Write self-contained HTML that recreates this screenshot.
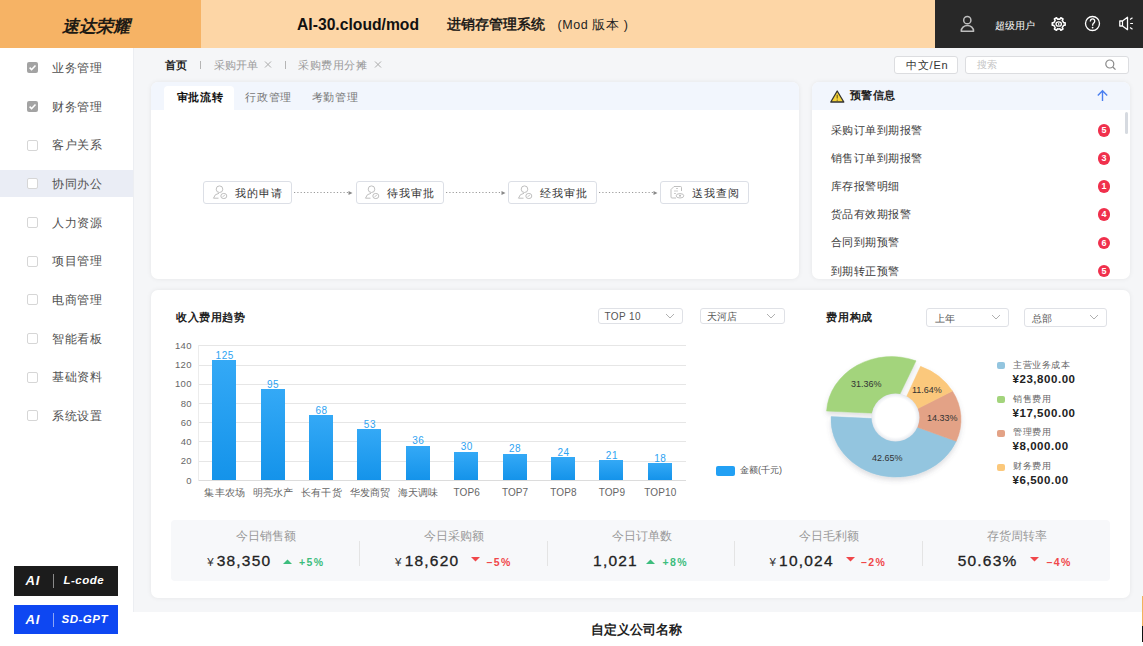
<!DOCTYPE html><html><head><meta charset="utf-8"><style>
*{box-sizing:border-box;margin:0;padding:0}
html,body{width:1143px;height:646px;overflow:hidden;background:#f5f6f8;font-family:"Liberation Sans",sans-serif;color:#333}
.a{position:absolute;white-space:nowrap;line-height:1;-webkit-text-stroke-width:0px}
.card{position:absolute;background:#fff;border-radius:7px;box-shadow:0 0 5px rgba(0,0,0,0.07)}
</style></head><body>
<div class="a" style="left:0;top:0;width:1143px;height:48px;background:#fdd6a6"></div>
<div class="a" style="left:0;top:0;width:201px;height:48px;background:#f6b365"></div>
<div class="a" style="left:935px;top:0;width:208px;height:48px;background:#282828"></div>
<div class="a" style="left:62px;top:17.5px;font-size:17px;font-weight:bold;font-style:italic;color:#1e1a14">速达荣耀</div>
<div class="a" style="left:297px;top:16.5px;font-size:15.7px;font-weight:bold;color:#111">AI-30.cloud/mod</div>
<div class="a" style="left:447px;top:17px;font-size:14px;color:#111;-webkit-text-stroke-width:0.45px">进销存管理系统</div>
<div class="a" style="left:557.5px;top:18.5px;font-size:12.5px;letter-spacing:0.6px;color:#222">(Mod 版本 )</div>
<div class="a" style="left:995px;top:20.5px;font-size:10px;color:#fff">超级用户</div>
<svg class="a" style="left:958px;top:14px" width="20" height="20" viewBox="0 0 20 20">
<circle cx="9.3" cy="6.2" r="3.6" fill="none" stroke="#bdbdbd" stroke-width="1.5"/>
<path d="M3.2 17.2 A6.2 5.8 0 0 1 15.6 17.2 Z" fill="none" stroke="#bdbdbd" stroke-width="1.5" stroke-linejoin="round"/>
</svg>
<svg class="a" style="left:1050px;top:15px" width="18" height="18" viewBox="0 0 18 18">
<path d="M13.03 6.50 L13.53 7.71 L15.18 7.74 L15.18 10.26 L13.53 10.29 L13.03 11.50 L12.24 12.54 L13.03 13.98 L10.85 15.24 L9.99 13.83 L8.70 14.00 L7.41 13.83 L6.55 15.24 L4.37 13.98 L5.16 12.54 L4.37 11.50 L3.87 10.29 L2.22 10.26 L2.22 7.74 L3.87 7.71 L4.37 6.50 L5.16 5.46 L4.37 4.02 L6.55 2.76 L7.41 4.17 L8.70 4.00 L9.99 4.17 L10.85 2.76 L13.03 4.02 L12.24 5.46 Z" fill="none" stroke="#fff" stroke-width="1.5" stroke-linejoin="round"/>
<ellipse cx="8.7" cy="9" rx="2.7" ry="2.2" fill="none" stroke="#fff" stroke-width="1.3"/>
<path d="M8.7 8 L8.7 10.2" stroke="#fff" stroke-width="1.1"/>
</svg>
<svg class="a" style="left:1084px;top:15px" width="18" height="18" viewBox="0 0 18 18">
<circle cx="8.5" cy="8.5" r="7" fill="none" stroke="#fff" stroke-width="1.3"/>
<path d="M6.3 6.5 Q6.5 3.8 8.7 3.9 Q10.9 4.1 10.7 6.3 Q10.5 7.6 9.3 8.4 Q8.6 9 8.6 10.8" fill="none" stroke="#fff" stroke-width="1.3"/>
<circle cx="8.6" cy="12.6" r="0.9" fill="#fff"/>
</svg>
<svg class="a" style="left:1118px;top:15px" width="18" height="18" viewBox="0 0 18 18">
<path d="M1.8 6 L4.5 6 L9.5 2.3 L9.5 14.7 L4.5 11 L1.8 11 Z" fill="none" stroke="#fff" stroke-width="1.3" stroke-linejoin="round"/>
<path d="M4.5 6 L4.5 11" stroke="#fff" stroke-width="1.2"/>
<path d="M12 4.5 L14.5 2.8 M12.2 8.5 L15 8.5 M12 12.5 L14.5 14.2" stroke="#fff" stroke-width="1.2"/>
</svg>
<div class="a" style="left:0;top:48px;width:134px;height:598px;background:#fff;border-right:1px solid #eceef2"></div>
<div class="a" style="left:27px;top:62.3px;width:11px;height:11px;border-radius:2px;background:#a3a3a3"></div>
<svg class="a" style="left:27px;top:62.3px" width="11" height="11" viewBox="0 0 11 11"><path d="M2.6 5.6 L4.6 7.6 L8.5 3.6" fill="none" stroke="#fff" stroke-width="1.5"/></svg>
<div class="a" style="left:52.3px;top:62.0px;font-size:12px;letter-spacing:0.6px;color:#505050">业务管理</div>
<div class="a" style="left:27px;top:100.9px;width:11px;height:11px;border-radius:2px;background:#a3a3a3"></div>
<svg class="a" style="left:27px;top:100.9px" width="11" height="11" viewBox="0 0 11 11"><path d="M2.6 5.6 L4.6 7.6 L8.5 3.6" fill="none" stroke="#fff" stroke-width="1.5"/></svg>
<div class="a" style="left:52.3px;top:100.6px;font-size:12px;letter-spacing:0.6px;color:#505050">财务管理</div>
<div class="a" style="left:27px;top:139.6px;width:11px;height:11px;border-radius:2px;border:1px solid #d6d6d6;background:#fff"></div>
<div class="a" style="left:52.3px;top:139.3px;font-size:12px;letter-spacing:0.6px;color:#505050">客户关系</div>
<div class="a" style="left:0;top:170.2px;width:133px;height:27px;background:#eaedf5"></div>
<div class="a" style="left:27px;top:178.2px;width:11px;height:11px;border-radius:2px;border:1px solid #d6d6d6;background:#fff"></div>
<div class="a" style="left:52.3px;top:177.9px;font-size:12px;letter-spacing:0.6px;color:#505050">协同办公</div>
<div class="a" style="left:27px;top:216.9px;width:11px;height:11px;border-radius:2px;border:1px solid #d6d6d6;background:#fff"></div>
<div class="a" style="left:52.3px;top:216.6px;font-size:12px;letter-spacing:0.6px;color:#505050">人力资源</div>
<div class="a" style="left:27px;top:255.6px;width:11px;height:11px;border-radius:2px;border:1px solid #d6d6d6;background:#fff"></div>
<div class="a" style="left:52.3px;top:255.2px;font-size:12px;letter-spacing:0.6px;color:#505050">项目管理</div>
<div class="a" style="left:27px;top:294.2px;width:11px;height:11px;border-radius:2px;border:1px solid #d6d6d6;background:#fff"></div>
<div class="a" style="left:52.3px;top:293.9px;font-size:12px;letter-spacing:0.6px;color:#505050">电商管理</div>
<div class="a" style="left:27px;top:332.9px;width:11px;height:11px;border-radius:2px;border:1px solid #d6d6d6;background:#fff"></div>
<div class="a" style="left:52.3px;top:332.6px;font-size:12px;letter-spacing:0.6px;color:#505050">智能看板</div>
<div class="a" style="left:27px;top:371.5px;width:11px;height:11px;border-radius:2px;border:1px solid #d6d6d6;background:#fff"></div>
<div class="a" style="left:52.3px;top:371.2px;font-size:12px;letter-spacing:0.6px;color:#505050">基础资料</div>
<div class="a" style="left:27px;top:410.1px;width:11px;height:11px;border-radius:2px;border:1px solid #d6d6d6;background:#fff"></div>
<div class="a" style="left:52.3px;top:409.8px;font-size:12px;letter-spacing:0.6px;color:#505050">系统设置</div>
<div class="a" style="left:13.5px;top:566px;width:104px;height:29.5px;background:#1c1c1c"></div>
<div class="a" style="left:13.5px;top:605px;width:104px;height:29px;background:#0e47f2"></div>
<div class="a" style="left:25.5px;top:574.0px;font-size:13px;font-weight:bold;font-style:italic;letter-spacing:0.8px;color:#fff">AI</div>
<div class="a" style="left:52.5px;top:574px;width:1px;height:14px;background:#8a8a8a"></div>
<div class="a" style="left:63.5px;top:575.0px;font-size:11.5px;font-weight:bold;font-style:italic;letter-spacing:0.5px;color:#fff">L-code</div>
<div class="a" style="left:25.5px;top:613.0px;font-size:13px;font-weight:bold;font-style:italic;letter-spacing:0.8px;color:#fff">AI</div>
<div class="a" style="left:52.5px;top:613px;width:1px;height:14px;background:#8da6f5"></div>
<div class="a" style="left:61.5px;top:614.0px;font-size:11.5px;font-weight:bold;font-style:italic;letter-spacing:0.5px;color:#fff">SD-GPT</div>
<div class="a" style="left:165px;top:59.5px;font-size:11px;font-weight:bold;color:#222">首页</div>
<div class="a" style="left:199.5px;top:61px;width:1px;height:8px;background:#b5b5b5"></div>
<div class="a" style="left:213.5px;top:59.5px;font-size:11px;color:#9a9a9a">采购开单</div>
<svg class="a" style="left:264px;top:60px" width="8" height="9" viewBox="0 0 8 9"><path d="M1 1.5 L7 7.5 M7 1.5 L1 7.5" stroke="#aaa" stroke-width="1"/></svg>
<div class="a" style="left:284.5px;top:61px;width:1px;height:8px;background:#b5b5b5"></div>
<div class="a" style="left:298px;top:59.5px;font-size:11px;letter-spacing:0.6px;color:#9a9a9a">采购费用分摊</div>
<svg class="a" style="left:373.5px;top:60px" width="8" height="9" viewBox="0 0 8 9"><path d="M1 1.5 L7 7.5 M7 1.5 L1 7.5" stroke="#aaa" stroke-width="1"/></svg>
<div class="a" style="left:894px;top:55.5px;width:64px;height:18.5px;border:1px solid #dcdde0;border-radius:3px;background:#fff"></div>
<div class="a" style="left:906px;top:59.5px;font-size:11px;letter-spacing:0.8px;color:#333">中文/En</div>
<div class="a" style="left:964.5px;top:55.5px;width:164.5px;height:18.5px;border:1px solid #dcdde0;border-radius:3px;background:#fff"></div>
<div class="a" style="left:976.5px;top:60px;font-size:10px;color:#c4c4c4">搜索</div>
<svg class="a" style="left:1104px;top:59px" width="14" height="12" viewBox="0 0 14 12"><circle cx="5.8" cy="5" r="4" fill="none" stroke="#8a8a8a" stroke-width="1.2"/><path d="M8.8 8 L11.5 10.6" stroke="#8a8a8a" stroke-width="1.3"/></svg>
<div class="card" style="left:151px;top:82px;width:648px;height:197px"></div>
<div class="a" style="left:151px;top:82px;width:648px;height:28px;background:#f2f6fd;border-radius:7px 7px 0 0"></div>
<div class="a" style="left:164px;top:85.5px;width:70px;height:24.5px;background:#fff;border-radius:4px 4px 0 0"></div>
<div class="a" style="left:176.5px;top:92px;font-size:11px;letter-spacing:0.8px;font-weight:bold;color:#111">审批流转</div>
<div class="a" style="left:245px;top:92px;font-size:11px;letter-spacing:0.75px;color:#777">行政管理</div>
<div class="a" style="left:311.5px;top:92px;font-size:11px;letter-spacing:0.75px;color:#777">考勤管理</div>
<div class="a" style="left:203.0px;top:181px;width:88.5px;height:23px;border:1px solid #dcdfe6;border-radius:3px;background:#fff"></div>
<svg class="a" style="left:211.5px;top:185px" width="18" height="16" viewBox="0 0 18 16"><circle cx="7.5" cy="4.2" r="3.3" fill="none" stroke="#b8b8b8" stroke-width="0.9"/><path d="M1.5 13.2 Q2.5 8.8 7 8.3 M1.5 13.2 L6.5 13.2" fill="none" stroke="#b8b8b8" stroke-width="0.9"/><ellipse cx="11.8" cy="11" rx="3" ry="2.6" fill="none" stroke="#b8b8b8" stroke-width="0.9"/><path d="M10.5 11.8 L12.8 10.2" stroke="#b8b8b8" stroke-width="0.8"/></svg>
<div class="a" style="left:234.5px;top:187.5px;font-size:11px;letter-spacing:1px;color:#333">我的申请</div>
<svg class="a" style="left:292.5px;top:191px" width="60.0" height="3"><line x1="1" y1="1.5" x2="56.0" y2="1.5" stroke="#9a9a9a" stroke-width="1.1" stroke-dasharray="1.2 2.1"/></svg>
<svg class="a" style="left:348.0px;top:189.5px" width="5" height="6" viewBox="0 0 5 6"><path d="M0.5 1 L4.5 3 L0.5 5 Z" fill="#888"/></svg>
<div class="a" style="left:355.5px;top:181px;width:88.5px;height:23px;border:1px solid #dcdfe6;border-radius:3px;background:#fff"></div>
<svg class="a" style="left:364.0px;top:185px" width="18" height="16" viewBox="0 0 18 16"><circle cx="7.5" cy="4.2" r="3.3" fill="none" stroke="#b8b8b8" stroke-width="0.9"/><path d="M1.5 13.2 Q2.5 8.8 7 8.3 M1.5 13.2 L6.5 13.2" fill="none" stroke="#b8b8b8" stroke-width="0.9"/><ellipse cx="11.8" cy="11" rx="3" ry="2.6" fill="none" stroke="#b8b8b8" stroke-width="0.9"/><path d="M10.5 11.8 L12.8 10.2" stroke="#b8b8b8" stroke-width="0.8"/></svg>
<div class="a" style="left:387.0px;top:187.5px;font-size:11px;letter-spacing:1px;color:#333">待我审批</div>
<svg class="a" style="left:445.0px;top:191px" width="60.0" height="3"><line x1="1" y1="1.5" x2="56.0" y2="1.5" stroke="#9a9a9a" stroke-width="1.1" stroke-dasharray="1.2 2.1"/></svg>
<svg class="a" style="left:500.5px;top:189.5px" width="5" height="6" viewBox="0 0 5 6"><path d="M0.5 1 L4.5 3 L0.5 5 Z" fill="#888"/></svg>
<div class="a" style="left:508.0px;top:181px;width:88.5px;height:23px;border:1px solid #dcdfe6;border-radius:3px;background:#fff"></div>
<svg class="a" style="left:516.5px;top:185px" width="18" height="16" viewBox="0 0 18 16"><circle cx="7.5" cy="4.2" r="3.3" fill="none" stroke="#b8b8b8" stroke-width="0.9"/><path d="M1.5 13.2 Q2.5 8.8 7 8.3 M1.5 13.2 L6.5 13.2" fill="none" stroke="#b8b8b8" stroke-width="0.9"/><ellipse cx="11.8" cy="11" rx="3" ry="2.6" fill="none" stroke="#b8b8b8" stroke-width="0.9"/><path d="M10.5 11.8 L12.8 10.2" stroke="#b8b8b8" stroke-width="0.8"/></svg>
<div class="a" style="left:539.5px;top:187.5px;font-size:11px;letter-spacing:1px;color:#333">经我审批</div>
<svg class="a" style="left:597.5px;top:191px" width="59.5" height="3"><line x1="1" y1="1.5" x2="55.5" y2="1.5" stroke="#9a9a9a" stroke-width="1.1" stroke-dasharray="1.2 2.1"/></svg>
<svg class="a" style="left:652.5px;top:189.5px" width="5" height="6" viewBox="0 0 5 6"><path d="M0.5 1 L4.5 3 L0.5 5 Z" fill="#888"/></svg>
<div class="a" style="left:660.0px;top:181px;width:88.5px;height:23px;border:1px solid #dcdfe6;border-radius:3px;background:#fff"></div>
<svg class="a" style="left:668.5px;top:185px" width="18" height="16" viewBox="0 0 18 16"><path d="M5 1.5 L11.5 1.5 Q12.5 1.5 12.5 2.5 L12.5 6 M7 13 L3 13 Q2 13 2 12 L2 4.5 L5 1.5" fill="none" stroke="#b8b8b8" stroke-width="0.9"/><path d="M5 6 L9 6 M5 8.5 L7 8.5 M7 3.5 L9 3.5" stroke="#c0c0c0" stroke-width="0.8"/><ellipse cx="11" cy="10.8" rx="3.8" ry="2.2" fill="none" stroke="#b8b8b8" stroke-width="0.9"/><circle cx="11" cy="10.8" r="1" fill="#b8b8b8"/></svg>
<div class="a" style="left:691.5px;top:187.5px;font-size:11px;letter-spacing:1px;color:#333">送我查阅</div>
<div class="card" style="left:811.5px;top:82px;width:318px;height:197px;overflow:hidden"></div>
<div class="a" style="left:811.5px;top:82px;width:318px;height:27.5px;background:#f2f6fd;border-radius:7px 7px 0 0"></div>
<svg class="a" style="left:830px;top:89.5px" width="15" height="13" viewBox="0 0 15 13"><path d="M7.2 1 L13.8 12 L0.8 12 Z" fill="#f5d33a" stroke="#333" stroke-width="1.3" stroke-linejoin="round"/><path d="M7.2 4.8 L7.2 8.6" stroke="#6b5a10" stroke-width="1.1"/><circle cx="7.2" cy="10.2" r="0.6" fill="#6b5a10"/></svg>
<div class="a" style="left:849.5px;top:90px;font-size:11px;letter-spacing:0.6px;font-weight:bold;color:#222">预警信息</div>
<svg class="a" style="left:1096px;top:89px" width="13" height="13" viewBox="0 0 13 13"><path d="M6.5 12 L6.5 2 M1.8 6.6 L6.5 1.8 L11.2 6.6" fill="none" stroke="#4a7ff0" stroke-width="1.4"/></svg>
<div class="a" style="left:830.5px;top:125.0px;font-size:11px;letter-spacing:0.5px;color:#3a3a3a">采购订单到期报警</div>
<div class="a" style="left:1097.8px;top:124.1px;width:12.5px;height:12.5px;border-radius:50%;background:#f0304c;color:#fff;font-size:9px;font-weight:bold;text-align:center;line-height:12.5px">5</div>
<div class="a" style="left:830.5px;top:153.1px;font-size:11px;letter-spacing:0.5px;color:#3a3a3a">销售订单到期报警</div>
<div class="a" style="left:1097.8px;top:152.2px;width:12.5px;height:12.5px;border-radius:50%;background:#f0304c;color:#fff;font-size:9px;font-weight:bold;text-align:center;line-height:12.5px">3</div>
<div class="a" style="left:830.5px;top:181.2px;font-size:11px;letter-spacing:0.5px;color:#3a3a3a">库存报警明细</div>
<div class="a" style="left:1097.8px;top:180.3px;width:12.5px;height:12.5px;border-radius:50%;background:#f0304c;color:#fff;font-size:9px;font-weight:bold;text-align:center;line-height:12.5px">1</div>
<div class="a" style="left:830.5px;top:209.3px;font-size:11px;letter-spacing:0.5px;color:#3a3a3a">货品有效期报警</div>
<div class="a" style="left:1097.8px;top:208.4px;width:12.5px;height:12.5px;border-radius:50%;background:#f0304c;color:#fff;font-size:9px;font-weight:bold;text-align:center;line-height:12.5px">4</div>
<div class="a" style="left:830.5px;top:237.4px;font-size:11px;letter-spacing:0.5px;color:#3a3a3a">合同到期预警</div>
<div class="a" style="left:1097.8px;top:236.5px;width:12.5px;height:12.5px;border-radius:50%;background:#f0304c;color:#fff;font-size:9px;font-weight:bold;text-align:center;line-height:12.5px">6</div>
<div class="a" style="left:830.5px;top:265.5px;font-size:11px;letter-spacing:0.5px;color:#3a3a3a">到期转正预警</div>
<div class="a" style="left:1097.8px;top:264.6px;width:12.5px;height:12.5px;border-radius:50%;background:#f0304c;color:#fff;font-size:9px;font-weight:bold;text-align:center;line-height:12.5px">5</div>
<div class="a" style="left:1124.5px;top:111.5px;width:3px;height:22px;border-radius:2px;background:#d6dae0"></div>
<div class="card" style="left:151px;top:290px;width:978.5px;height:308px"></div>
<div class="a" style="left:176px;top:311.5px;font-size:11px;letter-spacing:0.6px;font-weight:bold;color:#222">收入费用趋势</div>
<div class="a" style="left:597.5px;top:307.5px;width:85.5px;height:16.5px;border:1px solid #dfe1e6;border-radius:3px;background:#fff"></div>
<div class="a" style="left:604.5px;top:312.2px;font-size:10px;letter-spacing:0.4px;color:#555">TOP 10</div>
<svg class="a" style="left:665.0px;top:312.8px" width="10" height="6" viewBox="0 0 10 6"><path d="M1 1 L5 5 L9 1" fill="none" stroke="#b0b0b0" stroke-width="1"/></svg>
<div class="a" style="left:699.5px;top:307.5px;width:85.5px;height:16.5px;border:1px solid #dfe1e6;border-radius:3px;background:#fff"></div>
<div class="a" style="left:706.5px;top:312.2px;font-size:10px;letter-spacing:0.4px;color:#555">天河店</div>
<svg class="a" style="left:766.0px;top:312.8px" width="10" height="6" viewBox="0 0 10 6"><path d="M1 1 L5 5 L9 1" fill="none" stroke="#b0b0b0" stroke-width="1"/></svg>
<div class="a" style="left:826px;top:312px;font-size:11px;letter-spacing:0.8px;font-weight:bold;color:#222">费用构成</div>
<div class="a" style="left:926.0px;top:307.5px;width:82.5px;height:19.5px;border:1px solid #dfe1e6;border-radius:3px;background:#fff"></div>
<div class="a" style="left:935.0px;top:313.8px;font-size:10px;letter-spacing:0.4px;color:#555">上年</div>
<svg class="a" style="left:990.5px;top:314.2px" width="10" height="6" viewBox="0 0 10 6"><path d="M1 1 L5 5 L9 1" fill="none" stroke="#b0b0b0" stroke-width="1"/></svg>
<div class="a" style="left:1024.0px;top:307.5px;width:82.5px;height:19.5px;border:1px solid #dfe1e6;border-radius:3px;background:#fff"></div>
<div class="a" style="left:1032.0px;top:313.8px;font-size:10px;letter-spacing:0.4px;color:#555">总部</div>
<svg class="a" style="left:1089.0px;top:314.2px" width="10" height="6" viewBox="0 0 10 6"><path d="M1 1 L5 5 L9 1" fill="none" stroke="#b0b0b0" stroke-width="1"/></svg>
<div class="a" style="left:198px;top:479.9px;width:487.5px;height:1px;background:#dcdcdc"></div>
<div class="a" style="left:162px;top:475.6px;width:30px;text-align:right;font-size:9.5px;letter-spacing:0.4px;color:#666">0</div>
<div class="a" style="left:198px;top:460.7px;width:487.5px;height:1px;background:#e6e6e6"></div>
<div class="a" style="left:162px;top:456.4px;width:30px;text-align:right;font-size:9.5px;letter-spacing:0.4px;color:#666">20</div>
<div class="a" style="left:198px;top:441.4px;width:487.5px;height:1px;background:#e6e6e6"></div>
<div class="a" style="left:162px;top:437.1px;width:30px;text-align:right;font-size:9.5px;letter-spacing:0.4px;color:#666">40</div>
<div class="a" style="left:198px;top:422.2px;width:487.5px;height:1px;background:#e6e6e6"></div>
<div class="a" style="left:162px;top:417.9px;width:30px;text-align:right;font-size:9.5px;letter-spacing:0.4px;color:#666">60</div>
<div class="a" style="left:198px;top:402.9px;width:487.5px;height:1px;background:#e6e6e6"></div>
<div class="a" style="left:162px;top:398.6px;width:30px;text-align:right;font-size:9.5px;letter-spacing:0.4px;color:#666">80</div>
<div class="a" style="left:198px;top:383.7px;width:487.5px;height:1px;background:#e6e6e6"></div>
<div class="a" style="left:162px;top:379.4px;width:30px;text-align:right;font-size:9.5px;letter-spacing:0.4px;color:#666">100</div>
<div class="a" style="left:198px;top:364.5px;width:487.5px;height:1px;background:#e6e6e6"></div>
<div class="a" style="left:162px;top:360.2px;width:30px;text-align:right;font-size:9.5px;letter-spacing:0.4px;color:#666">120</div>
<div class="a" style="left:198px;top:345.2px;width:487.5px;height:1px;background:#e6e6e6"></div>
<div class="a" style="left:162px;top:340.9px;width:30px;text-align:right;font-size:9.5px;letter-spacing:0.4px;color:#666">140</div>
<div class="a" style="left:198px;top:345px;width:1px;height:136px;background:#ececec"></div>
<div class="a" style="left:212.2px;top:360.1px;width:24px;height:120.2px;background:linear-gradient(#34a9f6,#1493ea)"></div>
<div class="a" style="left:204.7px;top:350.6px;width:40px;text-align:center;font-size:10px;letter-spacing:0.5px;color:#2ea3f2">125</div>
<div class="a" style="left:194.7px;top:487.8px;width:60px;text-align:center;font-size:10px;letter-spacing:0.1px;color:#666">集丰农场</div>
<div class="a" style="left:260.6px;top:389.0px;width:24px;height:91.4px;background:linear-gradient(#34a9f6,#1493ea)"></div>
<div class="a" style="left:253.1px;top:379.5px;width:40px;text-align:center;font-size:10px;letter-spacing:0.5px;color:#2ea3f2">95</div>
<div class="a" style="left:243.1px;top:487.8px;width:60px;text-align:center;font-size:10px;letter-spacing:0.1px;color:#666">明亮水产</div>
<div class="a" style="left:309.0px;top:415.0px;width:24px;height:65.4px;background:linear-gradient(#34a9f6,#1493ea)"></div>
<div class="a" style="left:301.5px;top:405.5px;width:40px;text-align:center;font-size:10px;letter-spacing:0.5px;color:#2ea3f2">68</div>
<div class="a" style="left:291.5px;top:487.8px;width:60px;text-align:center;font-size:10px;letter-spacing:0.1px;color:#666">长有干货</div>
<div class="a" style="left:357.4px;top:429.4px;width:24px;height:51.0px;background:linear-gradient(#34a9f6,#1493ea)"></div>
<div class="a" style="left:349.9px;top:419.9px;width:40px;text-align:center;font-size:10px;letter-spacing:0.5px;color:#2ea3f2">53</div>
<div class="a" style="left:339.9px;top:487.8px;width:60px;text-align:center;font-size:10px;letter-spacing:0.1px;color:#666">华发商贸</div>
<div class="a" style="left:405.8px;top:445.8px;width:24px;height:34.6px;background:linear-gradient(#34a9f6,#1493ea)"></div>
<div class="a" style="left:398.3px;top:436.3px;width:40px;text-align:center;font-size:10px;letter-spacing:0.5px;color:#2ea3f2">36</div>
<div class="a" style="left:388.3px;top:487.8px;width:60px;text-align:center;font-size:10px;letter-spacing:0.1px;color:#666">海天调味</div>
<div class="a" style="left:454.2px;top:451.5px;width:24px;height:28.9px;background:linear-gradient(#34a9f6,#1493ea)"></div>
<div class="a" style="left:446.7px;top:442.0px;width:40px;text-align:center;font-size:10px;letter-spacing:0.5px;color:#2ea3f2">30</div>
<div class="a" style="left:436.7px;top:487.8px;width:60px;text-align:center;font-size:10px;letter-spacing:0.1px;color:#666">TOP6</div>
<div class="a" style="left:502.6px;top:453.5px;width:24px;height:26.9px;background:linear-gradient(#34a9f6,#1493ea)"></div>
<div class="a" style="left:495.1px;top:444.0px;width:40px;text-align:center;font-size:10px;letter-spacing:0.5px;color:#2ea3f2">28</div>
<div class="a" style="left:485.1px;top:487.8px;width:60px;text-align:center;font-size:10px;letter-spacing:0.1px;color:#666">TOP7</div>
<div class="a" style="left:551.0px;top:457.3px;width:24px;height:23.1px;background:linear-gradient(#34a9f6,#1493ea)"></div>
<div class="a" style="left:543.5px;top:447.8px;width:40px;text-align:center;font-size:10px;letter-spacing:0.5px;color:#2ea3f2">24</div>
<div class="a" style="left:533.5px;top:487.8px;width:60px;text-align:center;font-size:10px;letter-spacing:0.1px;color:#666">TOP8</div>
<div class="a" style="left:599.4px;top:460.2px;width:24px;height:20.2px;background:linear-gradient(#34a9f6,#1493ea)"></div>
<div class="a" style="left:591.9px;top:450.7px;width:40px;text-align:center;font-size:10px;letter-spacing:0.5px;color:#2ea3f2">21</div>
<div class="a" style="left:581.9px;top:487.8px;width:60px;text-align:center;font-size:10px;letter-spacing:0.1px;color:#666">TOP9</div>
<div class="a" style="left:647.8px;top:463.1px;width:24px;height:17.3px;background:linear-gradient(#34a9f6,#1493ea)"></div>
<div class="a" style="left:640.3px;top:453.6px;width:40px;text-align:center;font-size:10px;letter-spacing:0.5px;color:#2ea3f2">18</div>
<div class="a" style="left:630.3px;top:487.8px;width:60px;text-align:center;font-size:10px;letter-spacing:0.1px;color:#666">TOP10</div>
<div class="a" style="left:715.5px;top:465.5px;width:19.5px;height:10px;border-radius:2px;background:#22a0f4"></div>
<div class="a" style="left:740px;top:465.5px;font-size:9px;color:#555">金额(千元)</div>
<svg class="a" style="left:821px;top:343px" width="150" height="150" viewBox="0 0 150 150"><defs><filter id="sh" x="-20%" y="-20%" width="140%" height="140%"><feDropShadow dx="0" dy="3" stdDeviation="2.5" flood-color="#556" flood-opacity="0.2"/></filter><radialGradient id="hg" cx="0.5" cy="0.5" r="0.5"><stop offset="0.82" stop-color="#fff"/><stop offset="0.96" stop-color="#eceef2"/><stop offset="1" stop-color="#dfe3ea"/></radialGradient></defs><g filter="url(#sh)"><path d="M75.00 76.60 L135.22 98.23 A65.00 57.50 0 0 1 10.09 73.59 Z" fill="#93c5df" stroke="#93c5df" stroke-width="0.5"/><path d="M75.00 76.60 L131.40 48.02 A65.00 57.50 0 0 1 135.22 98.23 Z" fill="#e3a286" stroke="#e3a286" stroke-width="0.5"/><path d="M75.00 76.60 L99.56 23.36 A65.00 57.50 0 0 1 131.40 48.02 Z" fill="#fbc87b" stroke="#fbc87b" stroke-width="0.5"/><path d="M5.59 68.09 A65.00 57.50 0 0 1 95.06 17.86 L76.92 55.36 A17.00 17.00 0 0 0 53.52 70.21 Z" fill="#a3d47c" stroke="#a3d47c" stroke-width="0.5"/></g><circle cx="74.5" cy="74.5" r="24" fill="url(#hg)"/></svg>
<div class="a" style="left:851.0px;top:379.5px;font-size:9px;color:#333">31.36%</div>
<div class="a" style="left:912.0px;top:385.5px;font-size:9px;color:#333">11.64%</div>
<div class="a" style="left:927.0px;top:413.5px;font-size:9px;color:#333">14.33%</div>
<div class="a" style="left:872.0px;top:453.5px;font-size:9px;color:#333">42.65%</div>
<div class="a" style="left:997px;top:362.2px;width:8px;height:7px;border-radius:2px;background:#93c5df"></div>
<div class="a" style="left:1013px;top:360.7px;font-size:9px;letter-spacing:0.6px;color:#666">主营业务成本</div>
<div class="a" style="left:1012.5px;top:373.7px;font-size:11.5px;letter-spacing:0.55px;font-weight:bold;color:#222;-webkit-text-stroke-width:0">¥23,800.00</div>
<div class="a" style="left:997px;top:396.0px;width:8px;height:7px;border-radius:2px;background:#a3d47c"></div>
<div class="a" style="left:1013px;top:394.5px;font-size:9px;letter-spacing:0.6px;color:#666">销售费用</div>
<div class="a" style="left:1012.5px;top:407.5px;font-size:11.5px;letter-spacing:0.55px;font-weight:bold;color:#222;-webkit-text-stroke-width:0">¥17,500.00</div>
<div class="a" style="left:997px;top:429.8px;width:8px;height:7px;border-radius:2px;background:#e3a286"></div>
<div class="a" style="left:1013px;top:428.3px;font-size:9px;letter-spacing:0.6px;color:#666">管理费用</div>
<div class="a" style="left:1012.5px;top:441.3px;font-size:11.5px;letter-spacing:0.55px;font-weight:bold;color:#222;-webkit-text-stroke-width:0">¥8,000.00</div>
<div class="a" style="left:997px;top:463.6px;width:8px;height:7px;border-radius:2px;background:#fbc87b"></div>
<div class="a" style="left:1013px;top:462.1px;font-size:9px;letter-spacing:0.6px;color:#666">财务费用</div>
<div class="a" style="left:1012.5px;top:475.1px;font-size:11.5px;letter-spacing:0.55px;font-weight:bold;color:#222;-webkit-text-stroke-width:0">¥6,500.00</div>
<div class="a" style="left:171px;top:519.5px;width:939px;height:61.5px;background:#f7f8fa;border-radius:4px"></div>
<div class="a" style="left:190.9px;top:530.8px;width:150px;text-align:center;font-size:11.9px;color:#999">今日销售额</div>
<div class="a" style="left:207.2px;top:557px;font-size:11.5px;color:#333">¥</div>
<div class="a" style="left:216.7px;top:552.5px;font-size:15.5px;letter-spacing:1.2px;color:#222;-webkit-text-stroke:0.3px #222">38,350</div>
<svg class="a" style="left:283.4px;top:559.3px" width="9" height="5" viewBox="0 0 9 5"><path d="M0 5 L4.5 0.5 L9 5 Z" fill="#3dbd7d"/></svg>
<div class="a" style="left:299.0px;top:556.8px;font-size:10.5px;font-weight:bold;letter-spacing:1.4px;color:#3dbd7d">+5%</div>
<div class="a" style="left:378.7px;top:530.8px;width:150px;text-align:center;font-size:11.9px;color:#999">今日采购额</div>
<div class="a" style="left:358.8px;top:541px;width:1px;height:25px;background:#e4e4e4"></div>
<div class="a" style="left:395.0px;top:557px;font-size:11.5px;color:#333">¥</div>
<div class="a" style="left:404.7px;top:552.5px;font-size:15.5px;letter-spacing:1.2px;color:#222;-webkit-text-stroke:0.3px #222">18,620</div>
<svg class="a" style="left:470.8px;top:557.3px" width="9" height="5" viewBox="0 0 9 5"><path d="M0 0 L4.5 4.5 L9 0 Z" fill="#f0474a"/></svg>
<div class="a" style="left:486.5px;top:556.8px;font-size:10.5px;font-weight:bold;letter-spacing:1.4px;color:#f0474a">–5%</div>
<div class="a" style="left:566.5px;top:530.8px;width:150px;text-align:center;font-size:11.9px;color:#999">今日订单数</div>
<div class="a" style="left:546.6px;top:541px;width:1px;height:25px;background:#e4e4e4"></div>
<div class="a" style="left:593.1px;top:552.5px;font-size:15.5px;letter-spacing:1.2px;color:#222;-webkit-text-stroke:0.3px #222">1,021</div>
<svg class="a" style="left:646.1px;top:559.3px" width="9" height="5" viewBox="0 0 9 5"><path d="M0 5 L4.5 0.5 L9 5 Z" fill="#3dbd7d"/></svg>
<div class="a" style="left:662.5px;top:556.8px;font-size:10.5px;font-weight:bold;letter-spacing:1.4px;color:#3dbd7d">+8%</div>
<div class="a" style="left:754.3px;top:530.8px;width:150px;text-align:center;font-size:11.9px;color:#999">今日毛利额</div>
<div class="a" style="left:734.4px;top:541px;width:1px;height:25px;background:#e4e4e4"></div>
<div class="a" style="left:769.4px;top:557px;font-size:11.5px;color:#333">¥</div>
<div class="a" style="left:779.1px;top:552.5px;font-size:15.5px;letter-spacing:1.2px;color:#222;-webkit-text-stroke:0.3px #222">10,024</div>
<svg class="a" style="left:845.7px;top:557.3px" width="9" height="5" viewBox="0 0 9 5"><path d="M0 0 L4.5 4.5 L9 0 Z" fill="#f0474a"/></svg>
<div class="a" style="left:861.0px;top:556.8px;font-size:10.5px;font-weight:bold;letter-spacing:1.4px;color:#f0474a">–2%</div>
<div class="a" style="left:942.1px;top:530.8px;width:150px;text-align:center;font-size:11.9px;color:#999">存货周转率</div>
<div class="a" style="left:922.2px;top:541px;width:1px;height:25px;background:#e4e4e4"></div>
<div class="a" style="left:957.7px;top:552.5px;font-size:15.5px;letter-spacing:1.2px;color:#222;-webkit-text-stroke:0.3px #222">50.63%</div>
<svg class="a" style="left:1030.3px;top:557.3px" width="9" height="5" viewBox="0 0 9 5"><path d="M0 0 L4.5 4.5 L9 0 Z" fill="#f0474a"/></svg>
<div class="a" style="left:1046.5px;top:556.8px;font-size:10.5px;font-weight:bold;letter-spacing:1.4px;color:#f0474a">–4%</div>
<div class="a" style="left:133px;top:612px;width:1010px;height:34px;background:#fff"></div>
<div class="a" style="left:591px;top:624px;font-size:12.8px;font-weight:bold;color:#222">自定义公司名称</div>
<div class="a" style="left:1141.5px;top:596px;width:1.5px;height:30px;background:#f2b25c"></div>
<div class="a" style="left:1141.5px;top:626px;width:1.5px;height:16px;background:#111"></div>
</body></html>
